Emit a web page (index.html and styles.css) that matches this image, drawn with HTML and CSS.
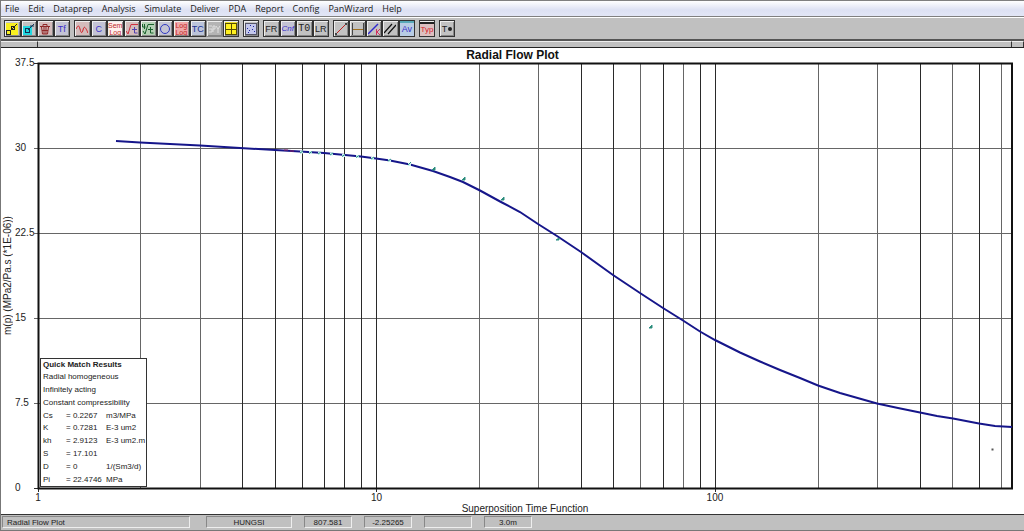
FILE: index.html
```html
<!DOCTYPE html>
<html lang="en">
<head>
<meta charset="utf-8">
<title>Radial Flow Plot</title>
<link rel="stylesheet" href="styles.css">
</head>
<body>
<nav class="menu">
  <button>File</button><button>Edit</button><button>Dataprep</button><button>Analysis</button><button>Simulate</button><button>Deliver</button><button>PDA</button><button>Report</button><button>Config</button><button>PanWizard</button><button>Help</button>
</nav>
<div class="toolbar" role="toolbar" aria-label="Tools">
  <div class="group four">
    <button aria-label="Open"><svg viewBox="0 0 12 12"><rect width="12" height="12" fill="#f8f020"/><path d="M0 7h5v5H0zM5 3h4v4H5z" fill="#222"/><path d="M1 8h3v3H1zM6 4h2v2H6z" fill="#f8f020"/><path d="M4 8l7-7" stroke="#222"/></svg></button>
    <button aria-label="Export"><svg viewBox="0 0 12 12"><path d="M0 3h9v9H0z" fill="#20d8e0"/><path d="M2 5h5v5H2z" fill="#135"/><path d="M3 6h3v3H3z" fill="#20d8e0"/><path d="M5 7l6-6M7 3h4" fill="none" stroke="#135"/></svg></button>
    <button class="rose" aria-label="Delete"><svg viewBox="0 0 12 12"><path d="M1 3.500h10M4 3V1.500h4v2M2.500 4l1 7h5l1-7M5 4v7M7 4v7M3 7.500h6" fill="none" stroke="#902828"/></svg></button>
    <button class="blue">Tf</button>
  </div>
  <div class="group ten">
    <button class="rose" aria-label="Wave"><svg viewBox="0 0 12 12"><path d="M0 6c2-4 3-4 4 0s2 5 3 1 2-4 5 3" fill="none" stroke="#d02028"/></svg></button>
    <button class="blue">C</button>
    <button class="semi"><span>Sem</span><span>Log</span></button>
    <button class="rose" aria-label="Square root of time"><svg viewBox="0 0 12 12"><path d="M0 8l2 3 3-9.500h7" fill="none" stroke="#d03040"/><path d="M8.500 4v6h3M6 6.500h5" fill="none" stroke="#5040b0"/></svg></button>
    <button class="green" aria-label="Fourth root of time"><svg viewBox="0 0 12 12"><path d="M.5 1v3h3M2.500 1v5M1 8l2 3 3-9.500h6M8.500 4v6h3M6 6.500h5" fill="none" stroke="#17602a"/></svg></button>
    <button class="blue" aria-label="Circle"><svg viewBox="0 0 12 12"><circle cx="6" cy="6" r="4.500" fill="none" stroke="#3038c0"/></svg></button>
    <button class="loglog"><span>Log</span><span>Log</span></button>
    <button class="navy">TC</button>
    <button class="off" aria-label="Sensitivity" disabled><svg viewBox="0 0 12 12"><path d="M1 3h3M1 6h3v3H1M5 3v6M5 3h2v3H5M8 3l2 3 2-3M10 6v4" fill="none" stroke="#e0e0e0"/></svg></button>
    <button class="yellow" aria-label="Windows"><svg viewBox="0 0 12 12"><path d="M0 0h12v12H0z" fill="#554c00"/><path d="M1 1h5v5H1zM7 1h4v5H7zM1 7h5v4H1zM7 7h4v4H7z" fill="#fff020"/></svg></button>
  </div>
  <div class="group one">
    <button aria-label="Scatter"><svg viewBox="0 0 12 12"><path d="M0 0h12v12H0z" fill="#556"/><path d="M1 1h10v10H1z" fill="#c4c8ec"/><path d="M2 5h1v1H2zM5 2h1v1H5zM8 3h1v1H8zM4 7h1v1H4zM7 6h1v1H7zM3 9h1v1H3zM9 8h1v1H9z" fill="#2028a0"/></svg></button>
  </div>
  <div class="group four">
    <button>FR</button>
    <button class="blue italic">Cnf</button>
    <button class="mono">T0</button>
    <button>LR</button>
  </div>
  <div class="group five">
    <button aria-label="Line"><svg viewBox="0 0 12 12"><path d="M1 11L11 1" stroke="#c02020"/><path d="M0 10h2v2H0zM10 0h2v2h-2z" fill="#444"/></svg></button>
    <button aria-label="Span"><svg viewBox="0 0 12 12"><path d="M0 0h1v12H0zM11 0h1v12h-1z" fill="#444"/><path d="M1 6h10v1H1z" fill="#a07020"/></svg></button>
    <button aria-label="Cut line"><svg viewBox="0 0 12 12"><path d="M0 11L10 1" stroke="#3028d0" stroke-width="1.500"/><path d="M8.500 6v6M12 6l-3 3 3 3" fill="none" stroke="#d03060"/></svg></button>
    <button aria-label="Parallel lines"><svg viewBox="0 0 12 12"><path d="M0 10L8 1M4 11l8-9" stroke="#111" stroke-width="1.200"/></svg></button>
    <button class="blue average">Av</button>
  </div>
  <div class="group one"><button class="typical">Typ</button></div>
  <div class="group one"><button aria-label="Test marker">T<i class="dot"></i></button></div>
</div>
<div class="splitter"><span></span><span></span><span></span></div>
<main class="chart">
  <h1>Radial Flow Plot</h1>
  <div class="ytitle">m(p) (MPa2/Pa.s (*1E-06))</div>
  <div class="yaxis"><span>37.5</span><span>30</span><span>22.5</span><span>15</span><span>7.5</span><span>0</span></div>
  <div class="plot">
    <svg viewBox="38 63 974 425" preserveAspectRatio="none" role="img" aria-label="m(p) against superposition time">
      <path class="minor" d="M140.500 63v425M200.500 63v425M479.500 63v425M538.500 63v425M640.500 63v425M683.500 63v425M818.500 63v425M877.500 63v425M952.500 63v425M1001.500 63v425M34 148.500h978M34 233.500h978M34 318.500h978M34 403.500h978"/>
      <path class="major" d="M242.500 63v425M275.500 63v425M302.500 63v425M324.500 63v425M344.500 63v425M361.500 63v425M376.500 63v429M581.500 63v425M613.500 63v425M663.500 63v425M700.500 63v425M715.500 63v429M920.500 63v425M979.500 63v425"/>
      <path class="major" d="M34 63.500h4M34 488.500h4M38.500 488v4"/>
      <path class="frame" d="M38.500 63.500H1012V488.500H38.500z"/>
      <path class="curve" d="M116 141L140 142.500 170 144 200 145.500 240 148 275 150 300 151.500 324 153 345 155 361 156.500 376 158.500 390 160.500 410 164.500 433 171 450 177 463 182 480 190.500 501 202 520 212 538 224 557 236 581 252 613 275 640 293 663 308 683 320.500 700 331.500 715 340 740 352.500 760 361.500 780 370 800 378 818 385.500 840 393 877 403.500 898 408 920 412.500 937 416 953 418.500 979 423.500 995 426 1012 427"/>
      <path class="match" d="M284 150h4M290 151h4"/>
      <g class="points">
        <path class="halo" d="M300 152h3M309 152.500h3M318 153h3M330 154h3M342 155.500h3M356 156.500h3M371 158.500h3M388 160.500h3M408 164.500h3"/>
        <path d="M300 153l3-2M309 153.500l3-2M318 154l3-2M330 155l3-2M342 156.500l3-2M356 157.500l3-2M371 159l3-2M388 161l3-2M408 165l3-3"/>
        <path d="M432 170l3-3v3zM462 180l3-3v3zM501 200l3-3v3zM556 240l3-2v2zM649 328l3-3v3z"/>
        <path class="last" d="M991.500 449.500h2"/>
      </g>
    </svg>
    <table class="results">
      <thead><tr><th colspan="3">Quick Match Results</th></tr></thead>
      <tbody>
      <tr><td colspan="3">Radial homogeneous</td></tr>
      <tr><td colspan="3">Infinitely acting</td></tr>
      <tr><td colspan="3">Constant compressibility</td></tr>
      <tr><td>Cs</td><td>= 0.2267</td><td>m3/MPa</td></tr>
      <tr><td>K</td><td>= 0.7281</td><td>E-3 um2</td></tr>
      <tr><td>kh</td><td>= 2.9123</td><td>E-3 um2.m</td></tr>
      <tr><td>S</td><td>= 17.101</td><td></td></tr>
      <tr><td>D</td><td>= 0</td><td>1/(Sm3/d)</td></tr>
      <tr><td>Pi</td><td>= 22.4746</td><td>MPa</td></tr>
      </tbody>
    </table>
  </div>
  <div class="xaxis">
    <div class="xticks"><span>1</span><span>10</span><span>100</span></div>
    <div class="xtitle">Superposition Time Function</div>
  </div>
</main>
<footer class="status">
  <span class="name">Radial Flow Plot</span><span class="well">HUNGSI</span><span>807.581</span><span>-2.25265</span><span></span><span>3.0m</span>
</footer>
</body>
</html>
```
FILE: styles.css
```css
* { box-sizing: border-box; }
body {
  margin: 0;
  min-height: 100vh;
  display: flex;
  flex-direction: column;
  background: #fff;
  color: #222;
  border-left: 1px solid #777;
  font-family: "Liberation Sans", Arial, sans-serif;
  font-size: 10px;
}
button { margin: 0; padding: 0; border: 0; background: none; color: inherit; font: inherit; }
.menu {
  display: flex;
  gap: 9px;
  height: 17px;
  padding-left: 4px;
  background: linear-gradient(#fff, #dde1f3 60%, #e2e6f6);
  border-top: 1px solid #808080;
  border-bottom: 1px solid #808080;
  font: 9px/14px "Open Sans", sans-serif;
}
.toolbar {
  display: flex;
  align-items: center;
  gap: 4px;
  height: 24px;
  padding-left: 3px;
  background: #c0c0c0;
  border-top: 1px solid #fff;
  border-bottom: 2px solid #555;
}
.group { display: flex; }
.one { width: 16px; }
.four { width: 66px; }
.five { width: 82px; }
.ten { width: 165px; }
.group button {
  flex: 1 1 0;
  min-width: 0;
  height: 17px;
  display: flex;
  align-items: center;
  justify-content: center;
  overflow: hidden;
  white-space: nowrap;
  background: #c2c2c2;
  border: 1px solid #333;
  box-shadow: inset 1px 1px #eee, inset -1px -1px #888;
  font-size: 9px;
  line-height: 14px;
}
.group svg { flex: none; width: 12px; height: 12px; }
.group .blue { color: #3a30c8; background: #c3c3d4; }
.group .navy { color: #203090; background: #bcc4da; }
.group .rose { background: #d4bcbc; }
.group .green { background: #b4d0b4; }
.group .yellow { background: #e8dc30; }
.group .italic { font-style: italic; font-size: 8px; }
.group .mono { font-family: "Liberation Mono", monospace; font-size: 10px; }
.group .semi, .group .loglog { flex-direction: column; font-size: 7px; line-height: 7px; color: #c02828; }
.group .semi { background: #fff0ee; }
.group .loglog { background: #f0a8a8; }
.group .off { background: #b4b4b4; border-color: #888; }
.group .average { box-shadow: inset 0 2px #58a8b8; background: #b8cce4; }
.group .typical { box-shadow: inset 0 1px #eee, inset 0 3px #222; background: #dcc0c0; color: #d82028; font-size: 8px; line-height: 10px; padding-top: 3px; }
.dot { width: 4px; height: 4px; margin-left: 1px; border-radius: 50%; background: #222; }
.splitter {
  display: grid;
  grid-template-columns: 37px 1fr 12px;
  height: 7px;
  background: #c0c0c0;
  border-bottom: 1px solid #222;
}
.splitter span { border-top: 1px solid #eee; border-right: 1px solid #333; }
.chart {
  flex: 1;
  display: grid;
  grid-template-columns: 14px 23px 1fr 12px;
  grid-template-rows: 15px 1fr 26px;
}
h1 { grid-column: 1 / -1; margin: 0; text-align: center; font-size: 12px; line-height: 15px; color: #111; }
.ytitle {
  grid-column: 1;
  writing-mode: vertical-rl;
  transform: rotate(180deg);
  text-align: center;
  line-height: 14px;
  white-space: nowrap;
}
.yaxis { display: flex; flex-direction: column; justify-content: space-between; margin: -6px 0; line-height: 12px; }
.plot { position: relative; }
.plot svg { display: block; position: absolute; width: 100%; height: 100%; overflow: visible; }
.plot path { fill: none; vector-effect: non-scaling-stroke; }
.plot .minor { stroke: #666; }
.plot .major { stroke: #2a2a2a; }
.plot .frame { stroke: #111; stroke-width: 2px; }
.plot .curve { stroke: #16168a; stroke-width: 2px; }
.plot .match { stroke: #902060; }
.plot .points path { fill: #2a8a50; stroke: #2f8f88; }
.plot .points .halo { stroke: #c8f0f0; stroke-width: 3px; }
.plot .points .last { stroke: #555; stroke-width: 2px; }
.results {
  position: absolute;
  left: 2px;
  bottom: 1px;
  width: 107px;
  height: 129px;
  border-collapse: separate;
  border-spacing: 0;
  background: #fff;
  border: 1px solid #333;
  font-size: 8px;
  line-height: 12px;
}
.results th, .results td { padding: 0 0 0 2px; text-align: left; white-space: nowrap; }
.results td:nth-child(1):not([colspan]) { width: 25px; }
.results td:nth-child(2) { width: 39px; padding-left: 0; }
.results td:nth-child(3) { padding-left: 1px; }
.xaxis { grid-column: 3; }
.xticks { position: relative; height: 15px; line-height: 12px; }
.xticks span { position: absolute; top: 4px; transform: translateX(-50%); }
.xticks span:nth-child(1) { left: 0; }
.xticks span:nth-child(2) { left: 34.750%; }
.xticks span:nth-child(3) { left: 69.500%; }
.xtitle { text-align: center; line-height: 12px; }
.status {
  display: flex;
  gap: 12px;
  height: 17px;
  padding: 1px 0 2px 1px;
  background: #c0c0c0;
  border-top: 1px solid #333;
  border-bottom: 1px solid #777;
  font-size: 8px;
  line-height: 11px;
}
.status span { width: 48px; text-align: center; border: 1px solid; border-color: #888 #eee #eee #888; }
.status .name { width: 188px; padding-left: 4px; margin-right: 4px; text-align: left; }
.status .well { width: 86px; }
```
